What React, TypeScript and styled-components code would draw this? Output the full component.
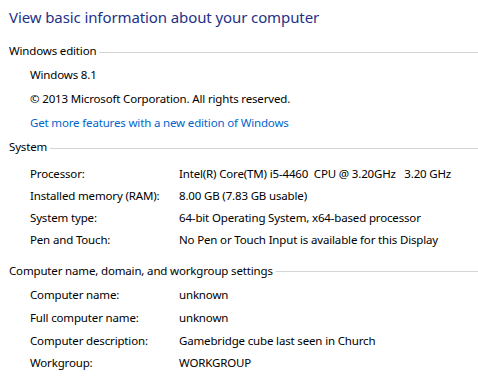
import React from "react";
import styled, { createGlobalStyle } from "styled-components";

const GlobalStyle = createGlobalStyle`
  html, body {
    margin: 0;
    padding: 0;
    background: #fff;
  }
  body {
    font-family: "Noto Sans", "Open Sans", sans-serif;
    font-size: 11.5px;
    letter-spacing: -0.16px;
    color: #000;
  }
`;

const Page = styled.div`
  width: 478px;
  height: 389px;
  overflow: hidden;
  padding-left: 9px;
  box-sizing: border-box;
  display: flex;
  flex-direction: column;
`;

const Title = styled.h1`
  margin: 6px 0 0 0;
  font-weight: normal;
  font-size: 15px;
  letter-spacing: -0.1px;
  line-height: 22px;
  color: #1e3287;
  white-space: nowrap;
`;

const Header = styled.div<{ $top: number }>`
  display: flex;
  align-items: center;
  margin-top: ${(p) => p.$top}px;
  height: 16px;
  line-height: 16px;
  white-space: nowrap;

  &::after {
    content: "";
    flex: 1;
    height: 1px;
    margin: 2px 0 0 3px;
    background: #d4d4d4;
  }
`;

const Rows = styled.div<{ $top: number; $row: number }>`
  display: grid;
  grid-template-columns: 149px 1fr;
  grid-auto-rows: ${(p) => p.$row}px;
  align-items: center;
  margin-top: ${(p) => p.$top}px;
  padding-left: 21px;
  white-space: pre;
`;

const Cell = styled.div<{ $wide?: boolean }>`
  grid-column: ${(p) => (p.$wide ? "1 / -1" : "auto")};
`;

const Link = styled.a`
  color: #0066cc;
  text-decoration: none;
  cursor: pointer;
  grid-column: 1 / -1;
`;

type Pair = [string, string];

const systemRows: Pair[] = [
  ["Processor:", "Intel(R) Core(TM) i5-4460  CPU @ 3.20GHz   3.20 GHz"],
  ["Installed memory (RAM):", "8.00 GB (7.83 GB usable)"],
  ["System type:", "64-bit Operating System, x64-based processor"],
  ["Pen and Touch:", "No Pen or Touch Input is available for this Display"],
];

const nameRows: Pair[] = [
  ["Computer name:", "unknown"],
  ["Full computer name:", "unknown"],
  ["Computer description:", "Gamebridge cube last seen in Church"],
  ["Workgroup:", "WORKGROUP"],
];

const PairRows = ({ rows }: { rows: Pair[] }) => (
  <>
    {rows.map(([label, value]) => (
      <React.Fragment key={label}>
        <Cell>{label}</Cell>
        <Cell>{value}</Cell>
      </React.Fragment>
    ))}
  </>
);

export default function App() {
  return (
    <>
      <GlobalStyle />
      <Page>
        <Title>View basic information about your computer</Title>

        <Header $top={15}>Windows edition</Header>
        <Rows $top={3} $row={24}>
          <Cell $wide>Windows 8.1</Cell>
          <Cell $wide>© 2013 Microsoft Corporation. All rights reserved.</Cell>
          <Link>Get more features with a new edition of Windows</Link>
        </Rows>

        <Header $top={5}>System</Header>
        <Rows $top={7} $row={22}>
          <PairRows rows={systemRows} />
        </Rows>

        <Header $top={12.5}>Computer name, domain, and workgroup settings</Header>
        <Rows $top={5} $row={22.7}>
          <PairRows rows={nameRows} />
        </Rows>
      </Page>
    </>
  );
}
